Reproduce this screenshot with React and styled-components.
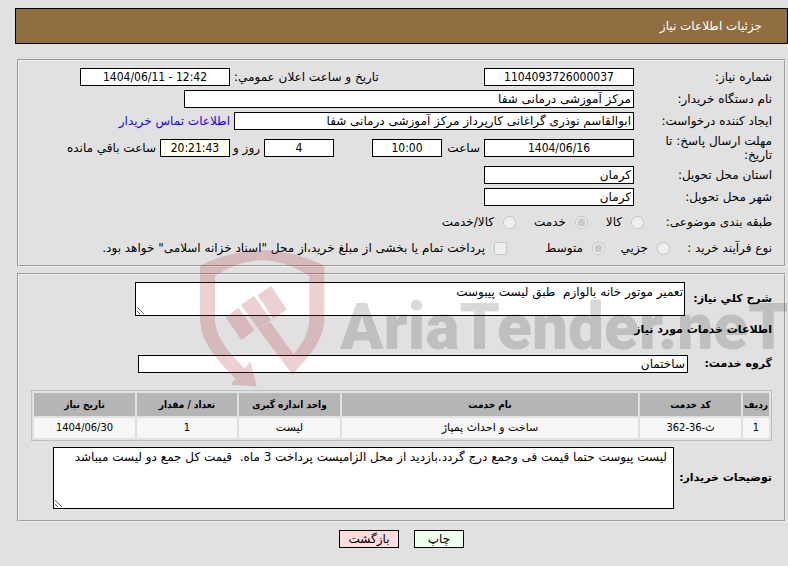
import React from "react";
import styled, { createGlobalStyle } from "styled-components";

const services = [
    { id: 1, code: "ث-36-362", name: "ساخت و احداث پمپاژ", unit: "لیست", amount: "1", date: "1404/06/30" },
]

const App = () => {
    return (
        <Page dir="rtl" lang="fa">
        <GlobalStyle />
        <TitleBar>جزئیات اطلاعات نیاز</TitleBar>

        <Panel>
        <Row>
            <Label htmlFor="number">شماره نیاز:</Label>
            <NumberField id="number" readOnly value="1104093726000037" />
            <WideLabel htmlFor="announced">تاریخ و ساعت اعلان عمومي:</WideLabel>
            <NumberField id="announced" readOnly dir="ltr" value="1404/06/11 - 12:42" />
        </Row>
        <Row>
            <Label htmlFor="agency">نام دستگاه خریدار:</Label>
            <Field id="agency" $width={450} readOnly value="مرکز آموزشی درمانی شفا" />
        </Row>
        <Row>
            <Label htmlFor="creator">ایجاد کننده درخواست:</Label>
            <Field id="creator" $width={400} readOnly value="ابوالقاسم نوذری گراغانی کارپرداز مرکز آموزشی درمانی شفا" />
            <ContactLink href="#contact">اطلاعات تماس خریدار</ContactLink>
        </Row>
        <Row $height={32}>
            <Label htmlFor="deadline">مهلت ارسال پاسخ: تا تاریخ:</Label>
            <NumberField id="deadline" readOnly value="1404/06/16" />
            <Unit htmlFor="hour" $width={34}>ساعت</Unit>
            <NumberField id="hour" $width={70} readOnly value="10:00" />
            <Spacer />
            <NumberField id="days" $width={70} readOnly value="4" />
            <Unit htmlFor="days" $width={26}>روز و</Unit>
            <NumberField id="remaining" $ivory $width={70} readOnly value="20:21:43" />
            <Unit htmlFor="remaining">ساعت باقي مانده</Unit>
        </Row>
        <Row>
            <Label htmlFor="province">استان محل تحویل:</Label>
            <Field id="province" readOnly value="کرمان" />
        </Row>
        <Row>
            <Label htmlFor="city">شهر محل تحویل:</Label>
            <Field id="city" readOnly value="کرمان" />
        </Row>
        <Row $height={28}>
            <GroupLabel $width={128}>طبقه بندی موضوعی:</GroupLabel>
            <Option $width={56}><Choice type="radio" name="subject" disabled />کالا</Option>
            <Option $width={72}><Choice type="radio" name="subject" disabled defaultChecked />خدمت</Option>
            <Option><Choice type="radio" name="subject" disabled />کالا/خدمت</Option>
        </Row>
        <Row $height={24}>
            <GroupLabel $width={102}>نوع فرآیند خرید :</GroupLabel>
            <Option $width={65}><Choice type="radio" name="process" disabled />جزیي</Option>
            <Option $width={98}><Choice type="radio" name="process" disabled defaultChecked />متوسط</Option>
            <Option><Choice type="checkbox" disabled />پرداخت تمام یا بخشی از مبلغ خرید،از محل "اسناد خزانه اسلامی" خواهد بود.</Option>
        </Row>
        </Panel>

        <Panel>
        <Row $height={38}>
            <BoldLabel htmlFor="summary" $width={87}>شرح کلي نیاز:</BoldLabel>
            <Area id="summary" $width={550} $height={34} readOnly value="تعمیر موتور خانه بالوازم  طبق لیست پیبوست" />
        </Row>
        <SectionTitle>اطلاعات خدمات مورد نیاز</SectionTitle>
        <Row $height={38}>
            <BoldLabel htmlFor="group" $width={84}>گروه خدمت:</BoldLabel>
            <Field id="group" $width={550} readOnly value="ساختمان" />
        </Row>
        <Table>
            <colgroup>
                <Col $width={26} />
                <Col $width={101} />
                <Col />
                <Col $width={101} />
                <Col $width={100} />
                <Col $width={101} />
            </colgroup>
            <thead>
                <tr>
                    <th>ردیف</th>
                    <th>کد خدمت</th>
                    <th>نام خدمت</th>
                    <th>واحد اندازه گیری</th>
                    <th>تعداد / مقدار</th>
                    <th>تاریخ نیاز</th>
                </tr>
            </thead>
            <tbody>
                {services.map((item) => (
                    <tr key={item.id}>
                        <NumberCell>{item.id}</NumberCell>
                        <NumberCell>{item.code}</NumberCell>
                        <td>{item.name}</td>
                        <td>{item.unit}</td>
                        <NumberCell>{item.amount}</NumberCell>
                        <NumberCell>{item.date}</NumberCell>
                    </tr>
                ))}
            </tbody>
        </Table>
        <Row $height={74}>
            <BoldLabel htmlFor="notes" $width={98}>توضیحات خریدار:</BoldLabel>
            <Area id="notes" $width={621} $height={62} $inset={6} readOnly value="لیست پیوست حتما قیمت فی وجمع درج گردد.بازدید از محل الزامیست پرداخت 3 ماه.  قیمت کل جمع دو لیست میباشد" />
        </Row>
        </Panel>

        <Actions>
            <Button type="button" $color="#eeffee" $width={50}>چاپ</Button>
            <Button type="button" $color="#ffdddd" $width={60}>بازگشت</Button>
        </Actions>

        <Watermark aria-hidden="true">
            <svg width="150" height="150" viewBox="0 0 450 450">
                <g fill="rgba(178, 52, 62, 0.23)">
                    <path d="M30 77Q215-15 403 77V235C403 305 352 352 308 405L205 267L240 245L311 343C335 312 358 280 358 235V108Q215 13 75 108V235C75 295 122 342 163 385L182 365L200 440L122 434L137 417C88 365 30 310 30 235Z" />
                    <path d="M107 232L145 203L194 270L154 300Z" />
                    <path d="M153 195L192 168L243 240L205 267Z" />
                    <path d="M203 165L243 138L290 208L250 236Z" />
                </g>
            </svg>
            <Brand dir="ltr">AriaTender.neT</Brand>
        </Watermark>
        </Page>
    )
}

const GlobalStyle = createGlobalStyle`
* {
    box-sizing: border-box;
}
body {
    margin: 0;
    background: #e1e1e1;
}
`

const Page = styled.main`
position: relative;
overflow: hidden;
padding: 8px 0 18px 15px;
color: #000;
font: 12px/14px "DejaVu Sans", sans-serif;
`

const TitleBar = styled.h1`
margin: 0 0 15px;
padding: 10px 25px;
border: 1px solid #000;
background: #906e40;
color: #fff;
font-size: 12px;
font-weight: normal;
line-height: 14px;
`

const Panel = styled.fieldset`
min-width: 0;
margin: 0 2px 6px;
padding: 5px 12px;
border: 2px groove #f0f0f0;
`

const Row = styled.div`
display: flex;
align-items: center;
gap: 4px;
min-height: ${(p) => p.$height || 22}px;
`

const Label = styled.label`
flex: none;
width: 134px;
padding-left: 16px;
`

const WideLabel = styled.label`
flex: none;
width: 246px;
text-align: left;
`

const BoldLabel = styled.label`
flex: none;
width: ${(p) => p.$width - 4}px;
font-size: 11px;
font-weight: bold;
white-space: nowrap;
`

const GroupLabel = styled.span`
flex: none;
width: ${(p) => p.$width - 4}px;
white-space: nowrap;
`

const Unit = styled.label`
flex: none;
width: ${(p) => (p.$width ? p.$width + "px" : "auto")};
white-space: nowrap;
`

const Spacer = styled.span`
width: 30px;
`

const Field = styled.input`
flex: 0 1 ${(p) => p.$width || 150}px;
width: ${(p) => p.$width || 150}px;
min-width: 0;
height: 18px;
padding: 0 2px;
border: 1px solid #000;
border-radius: 0;
background: ${(p) => (p.$ivory ? "#ffffee" : "#fff")};
color: #000;
font: inherit;
`

const NumberField = styled(Field)`
font-family: "DejaVu Sans Condensed", "DejaVu Sans", sans-serif;
text-align: center;
`

const Area = styled.textarea`
flex: 0 1 ${(p) => p.$width}px;
min-width: 0;
height: ${(p) => p.$height}px;
padding: 2px ${(p) => p.$inset || 1}px;
border: 1px solid #000;
color: #000;
font: inherit;
overflow: hidden;
`

const ContactLink = styled.a`
color: #1a00ff;
text-decoration: none;
`

const Option = styled.label`
display: flex;
flex: none;
align-items: center;
gap: 9px;
width: ${(p) => (p.$width ? p.$width - 4 + "px" : "auto")};
white-space: nowrap;
`

const Choice = styled.input`
width: 13px;
height: 13px;
margin: 0;
`

const SectionTitle = styled.h2`
margin: 5px 0 8px;
font-size: 11px;
line-height: 14px;
`

const Table = styled.table`
width: 100%;
margin: 7px 0 0;
border: 1px solid #c0c0c0;
border-spacing: 2px;
table-layout: fixed;
font-size: 11px;
text-align: center;
th {
    height: 23px;
    padding: 0;
    background: #b5b5b5;
    font-family: "DejaVu Sans Condensed", "DejaVu Sans", sans-serif;
    font-size: 10px;
    white-space: nowrap;
}
td {
    height: 20px;
    padding: 0;
    background: #f7f7f7;
}
`

const NumberCell = styled.td`
font-family: "DejaVu Sans Condensed", "DejaVu Sans", sans-serif;
`

const Col = styled.col`
width: ${(p) => (p.$width ? p.$width + "px" : "auto")};
`

const Actions = styled.div`
display: flex;
justify-content: center;
gap: 15px;
padding-top: 2px;
`

const Button = styled.button`
width: ${(p) => p.$width}px;
height: 18px;
padding: 0;
border: 1px solid #000;
background: ${(p) => p.$color};
color: #000;
font: inherit;
`

const Watermark = styled.div`
position: absolute;
top: 240px;
left: 190px;
display: flex;
direction: ltr;
pointer-events: none;
`

const Brand = styled.span`
padding-top: 48px;
color: rgba(0, 0, 0, 0.15);
font: 900 64px/80px "Roboto", sans-serif;
white-space: nowrap;
`

export default App;
